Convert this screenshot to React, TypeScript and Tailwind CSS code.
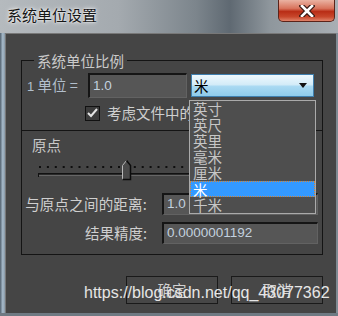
import React from "react";

const units = ["英寸", "英尺", "英里", "毫米", "厘米", "米", "千米"];

function Slider() {
  const dots = Array.from({ length: 35 }, (_, i) => 1 + i * 7.9);
  return (
    <svg width="277" height="24" viewBox="0 0 277 24">
      {dots.map((x, i) => (
        <rect key={i} x={x} y={8} width={2} height={2} fill="#0e0e0e" />
      ))}
      <rect x={0} y={15} width={277} height={1} fill="#111" />
      <rect x={0} y={16} width={277} height={1} fill="#2a2a2a" />
      <rect x={0} y={17} width={277} height={1} fill="#666" />
      <rect x={0} y={15} width={1} height={4} fill="#111" />
      <path d="M84.5 7.5 L88.5 2.5 L92.5 7.5 L92.5 21.5 L84.5 21.5 Z" fill="#4a4a4a" />
      <path d="M84.5 21.5 L84.5 7.5 L88.5 2.5" fill="none" stroke="#b9b9b9" />
      <path d="M88.5 2.5 L92.5 7.5 L92.5 21.5 L84.5 21.5" fill="none" stroke="#0c0c0c" strokeWidth="1.5" />
    </svg>
  );
}

function Field({ value, w, h }: { value: string; w: string; h: string }) {
  return (
    <div
      className={`${w} ${h} flex items-center bg-[#565656] border-t-2 border-l-2 border-[#151515] border-b border-r border-b-[#626262] border-r-[#626262] pl-[3px] font-['Liberation_Sans',sans-serif] text-[13.5px] text-[#c3d1df]`}
    >
      {value}
    </div>
  );
}

export default function App() {
  return (
    <div className="relative w-[338px] h-[316px] overflow-hidden flex flex-col font-['Noto_Sans_CJK_SC','Liberation_Sans',sans-serif] bg-[#8e979e]">
      {/* title bar */}
      <div className="h-[33px] flex justify-between bg-[linear-gradient(90deg,#b5babe_0%,#a4aaaf_35%,#7c858c_58%,#5f6972_68%,#8f979d_80%,#a9afb4_100%)]">
        <span className="pl-[7px] pt-[5px] text-[15px] leading-[20px] text-[#161616] [text-shadow:0_0_5px_#fff,0_0_2px_#fff]">
          系统单位设置
        </span>
        <div className="mr-[3px] w-[57px] h-[22px] rounded-b-[5px] border border-t-0 border-[#5b2319] bg-[linear-gradient(180deg,#eab2a2_0%,#d8735c_40%,#b92d16_55%,#c8472c_80%,#e0836a_100%)] flex items-center justify-center">
          <svg width="16" height="12" viewBox="0 0 16 12">
            <path d="M3 1 L13 11 M13 1 L3 11" stroke="#3a1a14" strokeWidth="5" strokeLinecap="square" />
            <path d="M3 1 L13 11 M13 1 L3 11" stroke="#fff" strokeWidth="2.6" strokeLinecap="square" />
          </svg>
        </div>
      </div>

      <div className="flex h-[280px]">
        <div className="w-[5px] bg-[linear-gradient(90deg,#51606d,#a8bccc_55%,#8797a4)]" />
        {/* client */}
        <div className="flex-1 bg-[#454545] border-l border-t border-[#787878] pl-[15px] pr-[13px] pt-[26px] text-[14.5px] text-[#cfcfcf]">
          <div className="w-[302px] h-[195px] border border-[#141414] flex flex-col">
            <span className="-mt-[9px] ml-[12px] px-[3px] w-fit h-[17px] leading-[17px] bg-[#454545] text-[#c9c9c9]">
              系统单位比例
            </span>

            <div className="mt-[4px] h-[25px] flex items-center">
              <span className="w-[66px] pl-[5px] text-[#b2bfcc] whitespace-nowrap">
                <span className="font-['Liberation_Sans',sans-serif] text-[13px]">1</span> 单位 =
              </span>
              <Field value="1.0" w="w-[99px]" h="h-[25px]" />
              <div className="ml-[4px] w-[123px] h-[23px] border border-[#3f7fae] bg-[linear-gradient(180deg,#eef8fd_0%,#d4ecf8_45%,#a9d9f2_55%,#8fcbea_100%)] flex items-center justify-between pl-[2px] pr-[6px] text-black">
                <span className="leading-[17px]">米</span>
                <svg width="8" height="5" viewBox="0 0 8 5">
                  <path d="M0 0 L8 0 L4 5 Z" fill="#111" />
                </svg>
              </div>
            </div>

            <div className="mt-[7px] h-[16px] flex items-center pl-[63px]">
              <div className="w-[15px] h-[15px] border border-[#111] bg-[#3c3c3c] flex items-center justify-center">
                <svg width="11" height="10" viewBox="0 0 11 10">
                  <path d="M1 5 L4 8 L10 1" fill="none" stroke="#e4e4e4" strokeWidth="2" />
                </svg>
              </div>
              <span className="ml-[7px] whitespace-nowrap leading-[16px]">考虑文件中的系统单位</span>
            </div>

            <div className="mt-[9px] border-t border-[#141414]" />

            <span className="mt-[5px] pl-[10px] h-[17px] leading-[17px] text-[#c9c9c9]">原点</span>

            <div className="mt-[5px] ml-[16px] h-[24px]">
              <Slider />
            </div>

            <div className="mt-[11px] h-[22px] flex items-center">
              <span className="w-[125px] text-right whitespace-nowrap tracking-[0.2px]">与原点之间的距离:</span>
              <div className="ml-[15px]">
                <Field value="1.0" w="w-[156px]" h="h-[22px]" />
              </div>
            </div>

            <div className="mt-[7px] h-[22px] flex items-center">
              <span className="w-[125px] text-right whitespace-nowrap">结果精度:</span>
              <div className="ml-[15px]">
                <Field value="0.0000001192" w="w-[156px]" h="h-[22px]" />
              </div>
            </div>
          </div>

          <div className="mt-[21px] flex justify-end gap-[13px]">
            <button className="w-[92px] h-[28px] border border-[#1a1a1a] bg-[#474747] text-[#d0d0d0]">确定</button>
            <button className="w-[92px] h-[28px] border border-[#1a1a1a] bg-[#474747] text-[#d0d0d0]">取消</button>
          </div>
        </div>
        <div className="w-[2px] bg-[#7f8a93]" />
      </div>
      <div className="h-[3px] bg-[#6f7a83]" />

      {/* open dropdown list */}
      <div className="absolute left-[189px] top-[100px] w-[127px] border border-[#aaaaaa] bg-[#4e4e4e] text-[14.5px] text-[#c6c6c6]">
        {units.map((u) => (
          <div
            key={u}
            className={
              u === "米"
                ? "h-[16px] leading-[15px] pl-[2px] bg-[#3399ff] border border-dotted border-[#d9852e] text-white"
                : "h-[16px] leading-[16px] pl-[3px]"
            }
          >
            {u}
          </div>
        ))}
      </div>

      {/* watermark */}
      <span className="absolute left-[84px] top-[284px] text-[16px] leading-[18px] font-['Liberation_Sans',sans-serif] text-[#e6e6e6] whitespace-nowrap">
        https://blog.csdn.net/qq_43077362
      </span>
    </div>
  );
}
